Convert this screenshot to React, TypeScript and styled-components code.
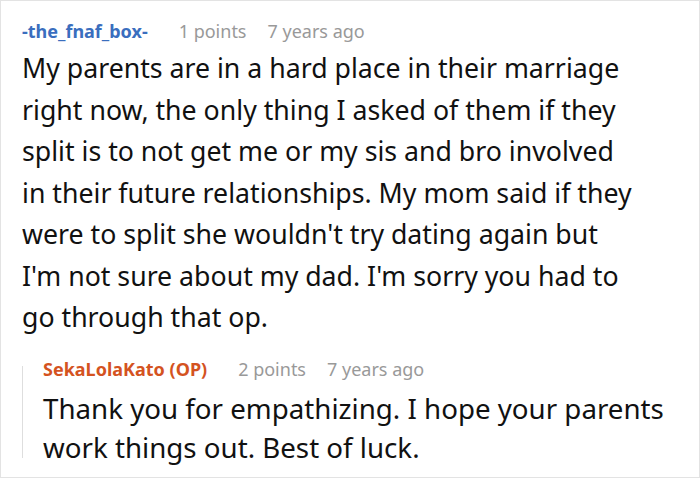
import React from 'react';
import styled, { createGlobalStyle } from 'styled-components';

const GlobalStyles = createGlobalStyle`
  body {
    margin: 0;
    background: #fff;
    font-family: 'Noto Sans', 'Open Sans', sans-serif;
  }
`;

const Frame = styled.div`
  width: 700px;
  height: 478px;
  box-sizing: border-box;
  border: 1px solid #e3e3e3;
  padding: 18px 0 0 21px;
  overflow: hidden;
`;

const Meta = styled.div`
  display: flex;
  align-items: baseline;
  gap: 21px;
  font-size: 18px;
  line-height: 24px;
  color: #999;
`;

const Author = styled.span<{ op?: boolean }>`
  font-weight: 700;
  color: ${props => (props.op ? '#d4531f' : '#3a6ebe')};
  margin-right: 10px;
`;

const Body = styled.div<{ size: number; lineHeight: number; top: number }>`
  font-size: ${props => props.size}px;
  line-height: ${props => props.lineHeight}px;
  color: #111;
  margin-top: ${props => props.top}px;
`;

const Line = styled.div`
  white-space: nowrap;
`;

const Reply = styled.div`
  display: flex;
  margin-top: 19px;
`;

const Rail = styled.div`
  width: 1px;
  background: #dedede;
  margin: 9px 20px 9px 0;
`;

const ReplyContent = styled.div`
  flex: 1;
`;

const body = [
  'My parents are in a hard place in their marriage',
  'right now, the only thing I asked of them if they',
  'split is to not get me or my sis and bro involved',
  'in their future relationships. My mom said if they',
  "were to split she wouldn't try dating again but",
  "I'm not sure about my dad. I'm sorry you had to",
  'go through that op.',
];

const reply = [
  'Thank you for empathizing. I hope your parents',
  'work things out. Best of luck.',
];

export default function App() {
  return (
    <>
      <GlobalStyles />
      <Frame>
        <Meta>
          <Author>-the_fnaf_box-</Author>
          <span>1 points</span>
          <span>7 years ago</span>
        </Meta>
        <Body size={26.7} lineHeight={41.5} top={4}>
          {body.map(l => (
            <Line key={l}>{l}</Line>
          ))}
        </Body>
        <Reply>
          <Rail />
          <ReplyContent>
            <Meta>
              <Author op>SekaLolaKato (OP)</Author>
              <span>2 points</span>
              <span>7 years ago</span>
            </Meta>
            <Body size={27.7} lineHeight={39} top={8}>
              {reply.map(l => (
                <Line key={l}>{l}</Line>
              ))}
            </Body>
          </ReplyContent>
        </Reply>
      </Frame>
    </>
  );
}
